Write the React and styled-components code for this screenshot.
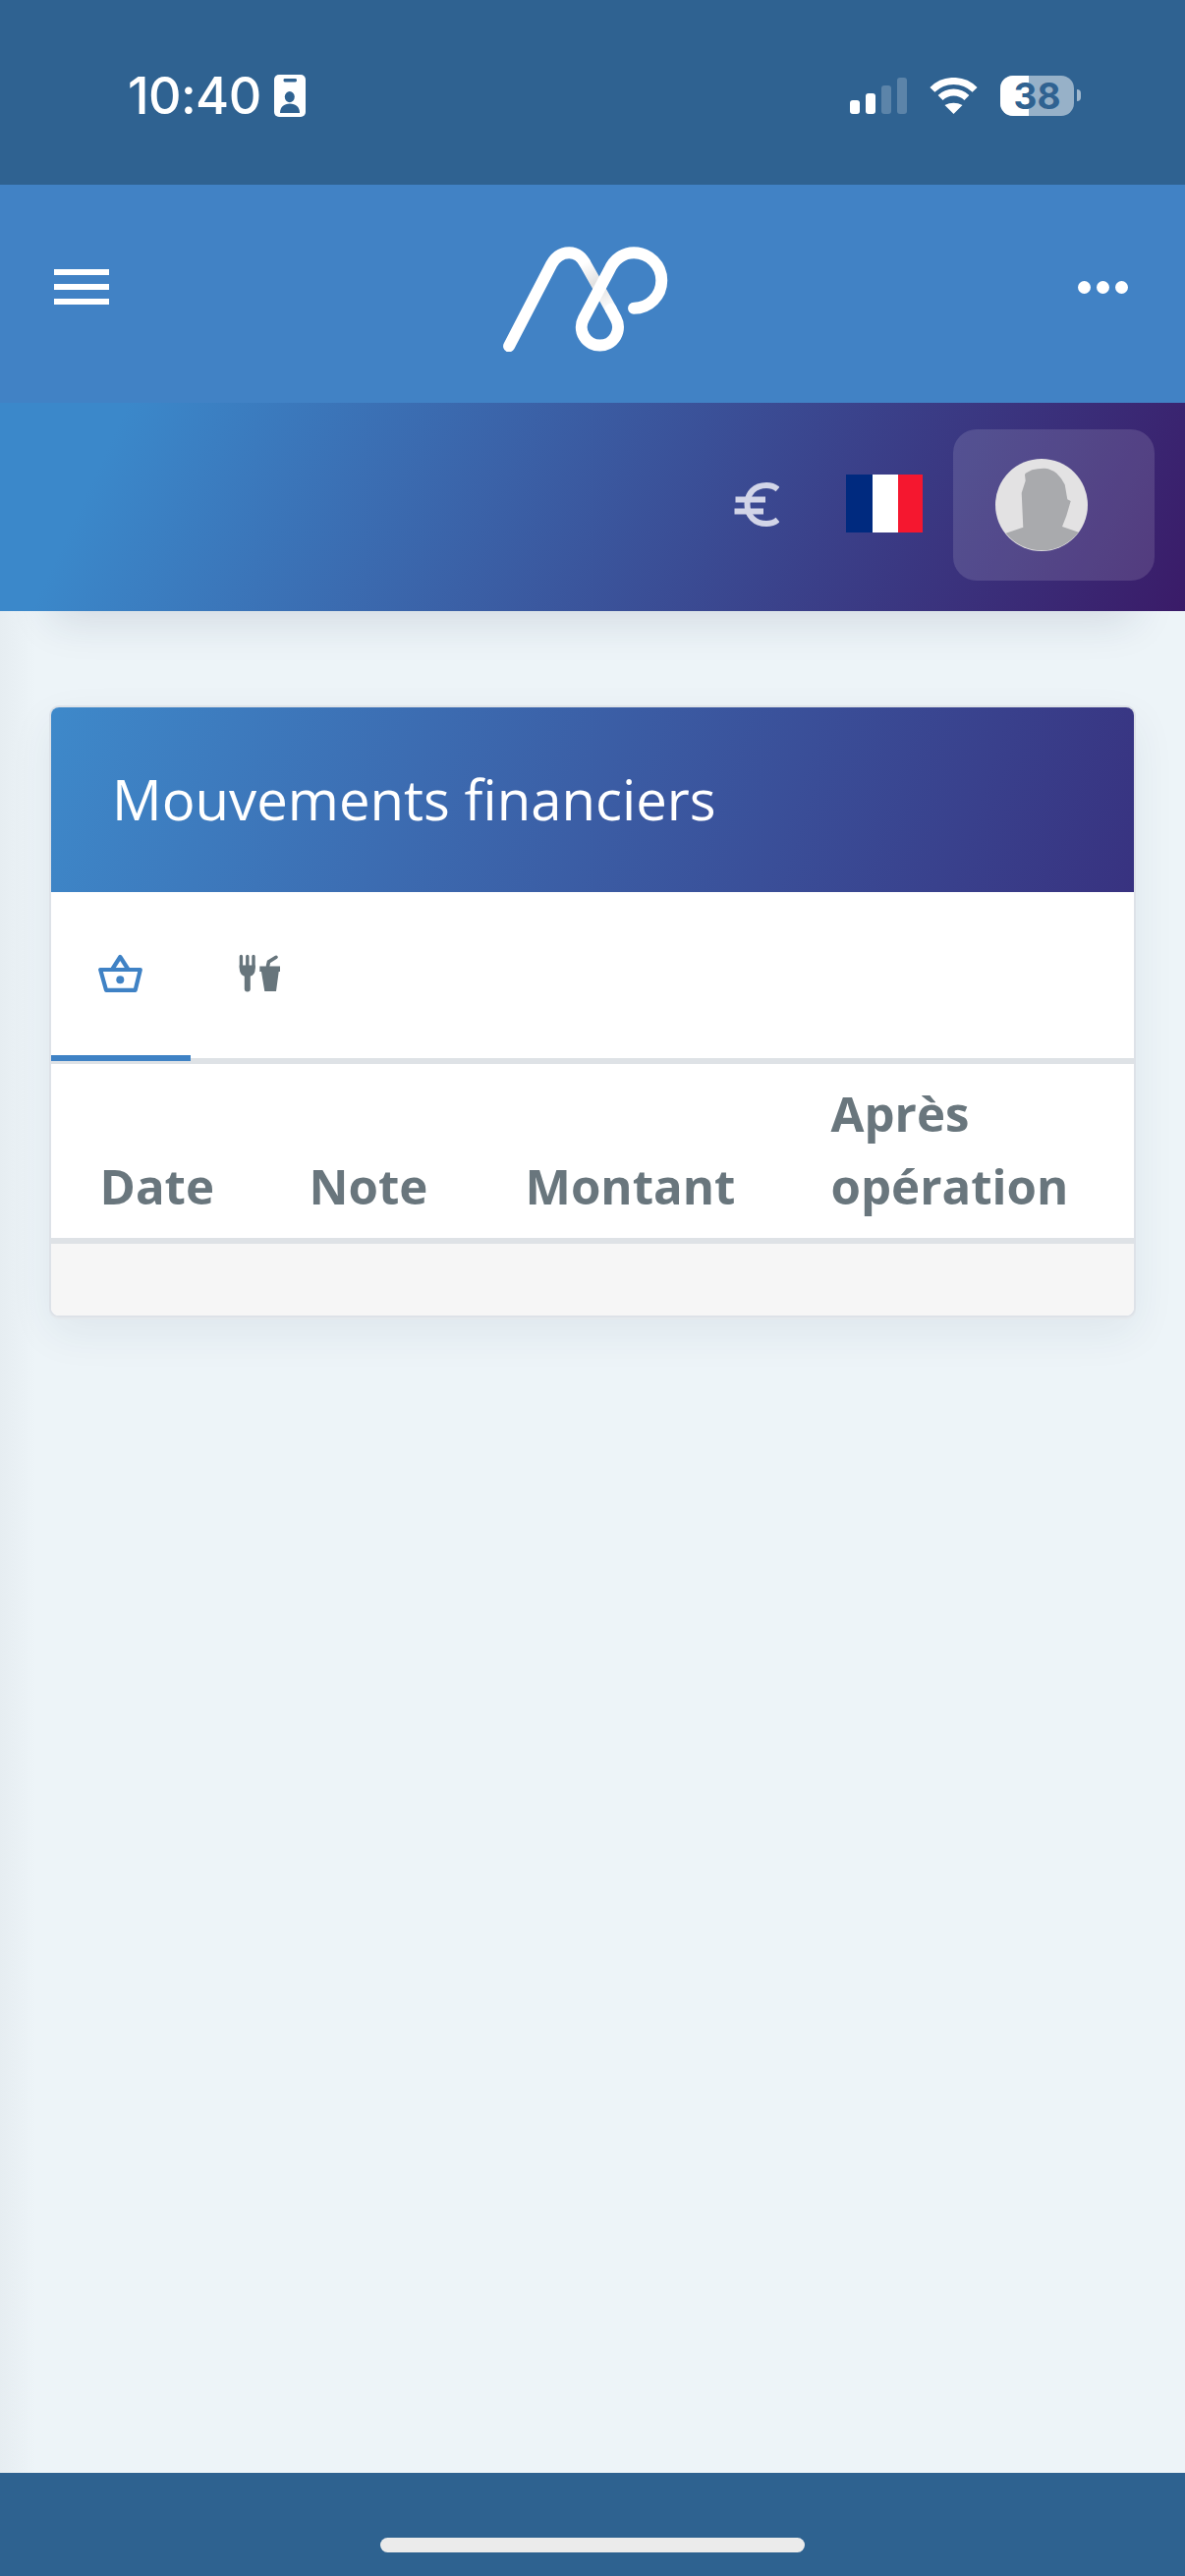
import React from 'react';
import styled, { createGlobalStyle } from 'styled-components';

const Global = createGlobalStyle`
  html, body { margin: 0; padding: 0; background: #edf4f8; }
  #root { height: 100vh; }
`;

const Page = styled.div`
  height: 2622px;
  display: flex;
  flex-direction: column;
  overflow: hidden;
  background: linear-gradient(to right, #e6edf1 0, #edf4f8 36px);
  font-family: "Open Sans", "Noto Sans", sans-serif;
`;

const StatusBar = styled.div`
  height: 188px;
  flex: none;
  background: #2f6291;
  display: flex;
  align-items: flex-start;
  justify-content: space-between;
  padding: 76px 113px 0 130px;
  box-sizing: border-box;
`;
const StatusLeft = styled.div`
  display: flex;
  align-items: flex-start;
  gap: 13px;
`;
const Time = styled.span`
  font-family: Inter, "Liberation Sans", sans-serif;
  font-size: 52px;
  font-weight: 500;
  line-height: 44px;
  color: #fff;
  letter-spacing: -0.6px;
`;
const StatusRight = styled.div`
  display: flex;
  align-items: flex-start;
  gap: 22px;
`;
const Signal = styled.div`
  display: flex;
  align-items: flex-end;
  gap: 6px;
  height: 37px;
  margin-top: 3px;
`;
const SignalBar = styled.i`
  display: block;
  width: 10px;
  height: ${p => p.$h}px;
  border-radius: 3px;
  background: ${p => (p.$on ? '#fff' : 'rgba(255,255,255,.22)')};
`;
const Wifi = styled.svg`
  width: 51px;
  height: 37px;
  margin-top: 3px;
  display: block;
`;
const Battery = styled.div`
  position: relative;
  width: 75px;
  height: 41px;
  margin-top: 1px;
  border-radius: 13px;
  background: rgba(255, 255, 255, 0.5);
  &::after {
    content: '';
    position: absolute;
    left: 78px;
    top: 14px;
    width: 4px;
    height: 12px;
    border-radius: 0 6px 6px 0;
    background: rgba(255, 255, 255, 0.55);
  }
`;
const BatteryFill = styled.div`
  position: absolute;
  inset: 0 auto 0 0;
  width: 29px;
  background: #fff;
  border-radius: 13px 0 0 13px;
`;
const BatteryText = styled.span`
  position: absolute;
  inset: 0;
  text-align: center;
  font-family: Inter, "Liberation Sans", sans-serif;
  font-size: 37px;
  font-weight: 700;
  line-height: 41px;
  color: #2f6291;
`;

const Header = styled.header`
  height: 222px;
  flex: none;
  background: #4182c5;
  box-sizing: border-box;
  padding: 63px 58px 0 55px;
  display: grid;
  grid-template-columns: 457px 168px 1fr;
  align-items: start;
`;
const Burger = styled.button`
  all: unset;
  width: 56px;
  display: flex;
  flex-direction: column;
  gap: 9px;
  margin-top: 23px;
  span { display: block; height: 6px; background: #fff; }
`;
const Logo = styled.svg`
  width: 168px;
  height: 107px;
  display: block;
`;
const Dots = styled.div`
  justify-self: end;
  display: flex;
  gap: 6px;
  margin-top: 35px;
  i { display: block; width: 13px; height: 13px; border-radius: 50%; background: #fff; }
`;

const Bar = styled.div`
  position: relative;
  height: 212px;
  flex: none;
  box-sizing: border-box;
  background: linear-gradient(115deg, #3b88ca 10%, #3a1b68 100%);
  display: flex;
  justify-content: flex-end;
  align-items: flex-start;
  padding: 27px 31px 0 0;
  box-shadow: 0 62px 44px -52px rgba(30, 50, 80, 0.13);
`;
const Euro = styled.svg`
  width: 46px;
  height: 45px;
  margin: 54px 68px 0 0;
  display: block;
`;
const Flag = styled.div`
  width: 78px;
  height: 59px;
  margin: 46px 31px 0 0;
  display: grid;
  grid-template-columns: 26.5px 26.5px 1fr;
`;
const Stripe = styled.i`
  display: block;
  background: ${p => p.$c};
`;
const AvatarBox = styled.div`
  width: 205px;
  height: 154px;
  box-sizing: border-box;
  padding: 30px 0 0 43px;
  border-radius: 24px;
  background: rgba(255, 255, 255, 0.13);
`;
const Avatar = styled.svg`
  width: 94px;
  height: 94px;
  display: block;
`;

const Main = styled.main`
  flex: 1;
  box-sizing: border-box;
  padding: 96px 50px 0;
`;
const Card = styled.section`
  width: 1106px;
  box-sizing: border-box;
  border: 2px solid #dde2e8;
  border-radius: 10px;
  box-shadow: 0 2px 0 #e4e9ed, 0 16px 44px rgba(30, 50, 80, 0.07);
  background: #fff;
  overflow: hidden;
`;
const CardHead = styled.div`
  height: 188px;
  box-sizing: border-box;
  padding-left: 62px;
  display: flex;
  align-items: center;
  background: linear-gradient(108deg, #3e89ca 0%, #383280 100%);
`;
const Title = styled.h2`
  margin: -2px 0 0;
  font-size: 56.3px;
  font-weight: 400;
  line-height: 72px;
  color: #fff;
`;
const Tabs = styled.nav`
  height: 175px;
  box-sizing: border-box;
  border-bottom: 6px solid #dee2e6;
  display: flex;
  align-items: flex-start;
`;
const Tab = styled.div`
  width: ${p => p.$w}px;
  height: 172px;
  box-sizing: border-box;
  padding: 63px 0 0 ${p => p.$pad}px;
  border-bottom: 6px solid ${p => (p.$active ? '#3f82c5' : 'transparent')};
`;
const TabIcon = styled.svg`
  display: block;
  width: ${p => p.$w}px;
  height: 39px;
`;
const Table = styled.table`
  width: 100%;
  table-layout: fixed;
  border-collapse: separate;
  border-spacing: 0;
`;
const Th = styled.th`
  width: ${p => p.$w};
  box-sizing: border-box;
  padding: 13px 0 16px 49.5px;
  border-bottom: 6px solid #dee2e6;
  vertical-align: bottom;
  text-align: left;
  font-size: 49.2px;
  font-weight: 700;
  line-height: 1.5;
  color: #69767d;
`;
const Foot = styled.div`
  height: 73px;
  background: #f6f6f6;
`;
const Footer = styled.footer`
  height: 105px;
  flex: none;
  box-sizing: border-box;
  background: #2e6290;
  padding-top: 66px;
  display: flex;
  justify-content: center;
`;
const Home = styled.div`
  width: 432px;
  height: 15px;
  border-radius: 8px;
  background: #ebebeb;
`;

const IdBadge = () => (
  <svg width="32" height="43" viewBox="0 0 32 43" style={{ display: 'block' }}>
    <rect width="32" height="43" rx="5" fill="#fff" />
    <rect x="9.5" y="4" width="13.5" height="3.4" rx="1.4" fill="#2f6291" />
    <ellipse cx="15.8" cy="22.6" rx="5" ry="5.6" fill="#2f6291" />
    <path d="M6 39 C6 33 10 29.5 16 29.5 C22 29.5 26 33 26 39 Z" fill="#2f6291" />
  </svg>
);

export default function App() {
  return (
    <Page>
      <Global />
      <StatusBar>
        <StatusLeft>
          <Time>10:40</Time>
          <IdBadge />
        </StatusLeft>
        <StatusRight>
          <Signal>
            <SignalBar $on $h={14} />
            <SignalBar $on $h={21} />
            <SignalBar $h={29} />
            <SignalBar $h={37} />
          </Signal>
          <Wifi viewBox="0 0 51 37">
            <g fill="none" stroke="#fff" strokeWidth="7">
              <path d="M3.9 12.4 A30.5 30.5 0 0 1 47.1 12.4" />
              <path d="M12.1 20.6 A19 19 0 0 1 38.9 20.6" />
            </g>
            <path d="M25.5 37 L16.5 28 Q25.5 23.5 34.5 28 Z" fill="#fff" />
          </Wifi>
          <Battery>
            <BatteryFill />
            <BatteryText>38</BatteryText>
          </Battery>
        </StatusRight>
      </StatusBar>

      <Header>
        <Burger aria-label="menu"><span /><span /><span /></Burger>
        <Logo viewBox="95 93 505 322">
          <defs>
            <linearGradient id="sh" gradientUnits="userSpaceOnUse" x1="345" y1="143" x2="425" y2="285">
              <stop offset="0" stopColor="#fff" />
              <stop offset="0.42" stopColor="#e2e2e2" />
              <stop offset="0.62" stopColor="#e6e6e6" />
              <stop offset="1" stopColor="#fff" />
            </linearGradient>
          </defs>
          <g fill="none" strokeWidth="36" strokeLinecap="round">
            <path stroke="#fff" d="M113 398 L243 147 C258 120 278 112 297 112 C318 112 335 125 345 143" />
            <path stroke="url(#sh)" d="M345 143 L425 285" />
            <path stroke="#fff" d="M425 285 L440 313 A56 56 0 1 1 341 314 L420 165 C435 130 465 112 495 112 A85 85 0 1 1 495 282" />
          </g>
        </Logo>
        <Dots><i /><i /><i /></Dots>
      </Header>

      <Bar>
        <Euro viewBox="0 0 46 45">
          <g fill="none" stroke="#d2d5e8" strokeWidth="6">
            <path d="M44.5 7 C41 4 37 3 33 3 C21 3 13.5 11 13.5 22.5 C13.5 34 21 42 33 42 C37 42 41 41 44.5 38" />
            <path d="M1.5 17.5 H32" />
            <path d="M0.5 29.5 H30" />
          </g>
        </Euro>
        <Flag>
          <Stripe $c="#002a7f" />
          <Stripe $c="#fff" />
          <Stripe $c="#f5172f" />
        </Flag>
        <AvatarBox>
          <Avatar viewBox="0 0 94 94">
            <circle cx="47" cy="47" r="47" fill="#e3e2e3" />
            <path
              fill="#a9aaad"
              d="M30.7 14.7 L37.3 11.3 Q44 9.4 50.7 9.7 Q57 10.5 62.3 14.7 Q68 20 70.7 26.3 L73.3 41.3 L76.7 43 L72.3 58 L68 69 L84.7 74.7 A47 47 0 0 1 10.7 75.7 L28.3 69.7 L26.7 34.7 L30.7 22.3 L30 16.3 Z"
            />
          </Avatar>
        </AvatarBox>
      </Bar>

      <Main>
        <Card>
          <CardHead><Title>Mouvements financiers</Title></CardHead>
          <Tabs>
            <Tab $active $w={142} $pad={48}>
              <TabIcon $w={45} viewBox="0 0 45 39">
                <g fill="none" stroke="#3f82c5" strokeWidth="4.2" strokeLinejoin="round" strokeLinecap="round">
                  <path d="M2.2 16 H42.8 L37.7 36.8 H8 Z" />
                  <path d="M14.3 15.5 L22.3 3 L30.3 15.5" />
                </g>
                <circle cx="22.3" cy="26.3" r="4" fill="#3f82c5" />
              </TabIcon>
            </Tab>
            <Tab $w={142} $pad={49}>
              <TabIcon $w={42} viewBox="0 0 42 38">
                <g fill="none" stroke="#67757c" strokeLinecap="round">
                  <path strokeWidth="3.4" d="M2.4 2 V13 M8.8 2 V13 M15 2 V13" />
                  <path strokeWidth="6" d="M8.8 20 V35" />
                  <path strokeWidth="3.6" strokeLinecap="round" d="M29.5 12 L30.5 7.5 L38 2.8" />
                </g>
                <path fill="#67757c" d="M0.7 11 H16.8 V14 Q16.8 22.5 8.8 22.5 Q0.7 22.5 0.7 14 Z" />
                <path fill="#67757c" d="M21.3 12 H42.3 V17.5 H40.7 L38 37.5 H26.3 L23 17.5 H21.3 Z" />
              </TabIcon>
            </Tab>
          </Tabs>
          <Table>
            <thead>
              <tr>
                <Th $w="213px">Date</Th>
                <Th $w="220px">Note</Th>
                <Th $w="311px">Montant</Th>
                <Th>Après opération</Th>
              </tr>
            </thead>
          </Table>
          <Foot />
        </Card>
      </Main>

      <Footer><Home /></Footer>
    </Page>
  );
}
